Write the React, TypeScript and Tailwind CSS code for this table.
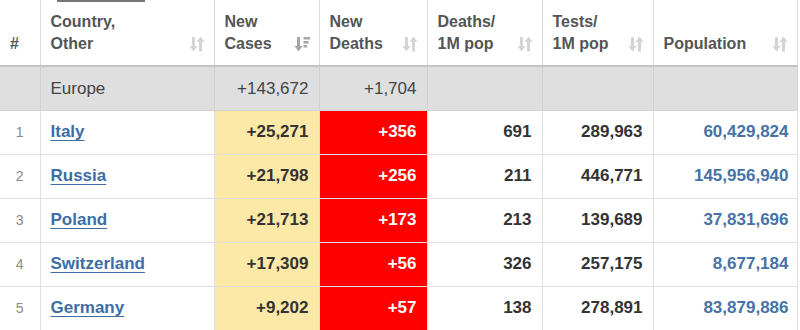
import React from 'react';

type Row = {
  n: number;
  country: string;
  newCases: string;
  newDeaths: string;
  deathsPerM: string;
  testsPerM: string;
  population: string;
};

const rows: Row[] = [
  { n: 1, country: 'Italy', newCases: '+25,271', newDeaths: '+356', deathsPerM: '691', testsPerM: '289,963', population: '60,429,824' },
  { n: 2, country: 'Russia', newCases: '+21,798', newDeaths: '+256', deathsPerM: '211', testsPerM: '446,771', population: '145,956,940' },
  { n: 3, country: 'Poland', newCases: '+21,713', newDeaths: '+173', deathsPerM: '213', testsPerM: '139,689', population: '37,831,696' },
  { n: 4, country: 'Switzerland', newCases: '+17,309', newDeaths: '+56', deathsPerM: '326', testsPerM: '257,175', population: '8,677,184' },
  { n: 5, country: 'Germany', newCases: '+9,202', newDeaths: '+57', deathsPerM: '138', testsPerM: '278,891', population: '83,879,886' },
];

const SortIcon = () => (
  <svg width="16" height="16" viewBox="0 0 16 16" className="shrink-0 mb-[3px]">
    <g fill="#d4d4d4">
      <rect x="3" y="1" width="3" height="10" />
      <path d="M0.5 10 L8.5 10 L4.5 15.5 Z" />
      <rect x="10" y="5" width="3" height="10.5" />
      <path d="M7.5 6 L15.5 6 L11.5 0.5 Z" />
    </g>
  </svg>
);

const SortDescIcon = () => (
  <svg width="16" height="16" viewBox="0 0 16 16" className="shrink-0 mb-[3px]">
    <g fill="#a6a6a6">
      <rect x="3" y="1" width="3" height="10" />
      <path d="M0.5 10 L8.5 10 L4.5 15.5 Z" />
      <rect x="9.5" y="1" width="6.5" height="2.5" />
      <rect x="9.5" y="5" width="5" height="2.5" />
      <rect x="9.5" y="9" width="3.5" height="2.5" />
    </g>
  </svg>
);

const Th: React.FC<{ label: React.ReactNode; sorted?: boolean }> = ({ label, sorted }) => (
  <th className="align-bottom text-left font-bold text-[16px] leading-[22px] text-[#555] pl-[10px] pr-[9px] pb-[10px] border-b-2 border-b-[#c2c2c2] border-r border-r-[#dcdcdc]">
    <div className="flex items-end justify-between">
      <span>{label}</span>
      {sorted ? <SortDescIcon /> : <SortIcon />}
    </div>
  </th>
);

export default function App() {
  return (
    <div className="relative w-[800px] h-[330px] bg-white overflow-hidden" style={{ fontFamily: '"Liberation Sans", Arial, sans-serif' }}>
      <div className="absolute left-[57px] top-0 w-[88px] h-[2px] bg-[#777]" />
      <table className="table-fixed border-collapse w-[797px]">
        <colgroup>
          <col className="w-[40px]" />
          <col className="w-[174px]" />
          <col className="w-[105px]" />
          <col className="w-[108px]" />
          <col className="w-[115px]" />
          <col className="w-[111px]" />
          <col className="w-[144px]" />
        </colgroup>
        <thead>
          <tr className="h-[66px]">
            <th className="align-bottom text-left font-bold text-[16px] leading-[22px] text-[#555] pl-[10px] pb-[10px] border-r border-r-[#dcdcdc] border-b-2 border-b-[#c2c2c2]">#</th>
            <Th label={<>Country,<br />Other</>} />
            <Th label={<>New<br />Cases</>} sorted />
            <Th label={<>New<br />Deaths</>} />
            <Th label={<>Deaths/<br />1M pop</>} />
            <Th label={<>Tests/<br />1M pop</>} />
            <Th label="Population" />
          </tr>
        </thead>
        <tbody className="text-[17px]">
          <tr className="h-[44px] bg-[#dfdfdf] text-[#444]">
            <td className="border-r border-b border-[#d2d2d2]" />
            <td className="border-r border-b border-[#d2d2d2] pl-[10px]">Europe</td>
            <td className="border-r border-b border-[#d2d2d2] text-right pr-[10px]">+143,672</td>
            <td className="border-r border-b border-[#d2d2d2] text-right pr-[10px]">+1,704</td>
            <td className="border-r border-b border-[#d2d2d2]" />
            <td className="border-r border-b border-[#d2d2d2]" />
            <td className="border-r border-b border-[#d2d2d2]" />
          </tr>
          {rows.map((r) => (
            <tr key={r.n} className="h-[44px] font-bold text-[#333]">
              <td className="border-r border-b border-[#e0e0e0] text-center font-normal text-[14px] text-[#8a8a8a]">{r.n}</td>
              <td className="border-r border-b border-[#e0e0e0] pl-[10px]">
                <a href="#" className="text-[#3d6ea6] underline underline-offset-[3px]">{r.country}</a>
              </td>
              <td className="border-r border-b border-[#e0e0e0] bg-[#fce9a8] text-right pr-[10px]">{r.newCases}</td>
              <td className="border-r border-b border-[#e0e0e0] bg-[#ff0000] text-white text-right pr-[10px]">{r.newDeaths}</td>
              <td className="border-r border-b border-[#e0e0e0] text-right pr-[10px]">{r.deathsPerM}</td>
              <td className="border-r border-b border-[#e0e0e0] text-right pr-[10px]">{r.testsPerM}</td>
              <td className="border-r border-b border-[#e0e0e0] text-right pr-[8px] text-[#4672a6]">{r.population}</td>
            </tr>
          ))}
        </tbody>
      </table>
    </div>
  );
}
